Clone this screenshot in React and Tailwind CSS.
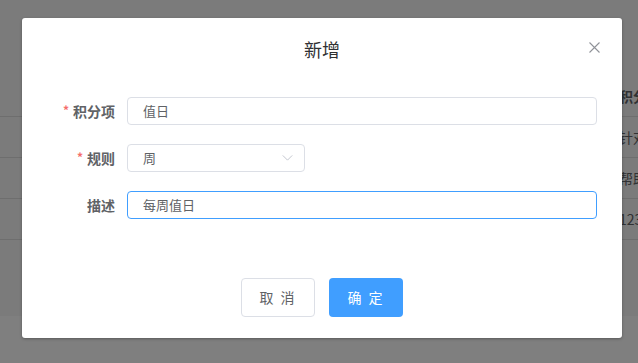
import React from "react";

const font = { fontFamily: '"Noto Sans CJK SC", "Noto Sans", sans-serif' };

function FormRow({ label, required, children }) {
  return (
    <div className="flex items-center h-[28px]">
      <label className="w-[105px] shrink-0 flex justify-end pr-3 text-[14px] font-bold text-[#606266]">
        {required && <span className="text-[#f56c6c] mr-[4px] text-[12px]">*</span>}
        {label}
      </label>
      {children}
    </div>
  );
}

export default function App() {
  const rows = ["积分", "针对", "帮助", "123"];

  return (
    <div className="relative w-[638px] h-[363px] overflow-hidden bg-white" style={font}>
      {/* page underneath */}
      <div className="h-[316px] bg-[#f6f6f6] pt-[76px]">
        {rows.map((r, i) => (
          <div
            key={r}
            className="h-[41px] border-b border-[#dcdcdc] flex items-center pl-[619px] text-[14px] text-[#606266] whitespace-nowrap"
          >
            <span className={i === 0 ? "font-bold" : ""}>{r}项目</span>
          </div>
        ))}
      </div>

      {/* mask */}
      <div className="absolute inset-0 bg-black/50" />

      {/* dialog */}
      <div className="absolute left-[22px] top-[18px] w-[600px] h-[320px] bg-white rounded-[3px] shadow-[0_1px_3px_rgba(0,0,0,0.3)] flex flex-col">
        <div className="pt-[19px] text-center text-[18px] leading-[24px] text-[#303133]">新增</div>
        <button className="absolute top-[24px] right-[22px] w-[11px] h-[11px] text-[#909399]">
          <svg viewBox="0 0 11 11" className="w-[11px] h-[11px]" fill="none" stroke="currentColor" strokeWidth="1.1">
            <path d="M0.5 0.5 L10.5 10.5 M10.5 0.5 L0.5 10.5" />
          </svg>
        </button>

        <div className="mt-[36px] flex flex-col gap-[19px] pr-[25px]">
          <FormRow label="积分项" required>
            <div className="flex-1 h-[28px] border border-[#dcdfe6] rounded-[4px] flex items-center pl-[15px] text-[13px] text-[#606266]">
              值日
            </div>
          </FormRow>
          <FormRow label="规则" required>
            <div className="w-[178px] h-[28px] border border-[#dcdfe6] rounded-[4px] flex items-center justify-between pl-[15px] pr-[11px] text-[13px] text-[#606266]">
              <span>周</span>
              <svg viewBox="0 0 12 7" className="w-[11px] h-[6px]" fill="none" stroke="#c0c4cc" strokeWidth="1.1">
                <path d="M0.5 0.5 L6 6 L11.5 0.5" />
              </svg>
            </div>
          </FormRow>
          <FormRow label="描述">
            <div className="flex-1 h-[28px] border border-[#409eff] rounded-[4px] flex items-center pl-[15px] text-[13px] text-[#606266]">
              每周值日
            </div>
          </FormRow>
        </div>

        <div className="mt-[59px] flex justify-center gap-[14px]">
          <button className="w-[74px] h-[39px] border border-[#dcdfe6] rounded-[4px] bg-white text-[14px] text-[#606266] tracking-[2px]">
            取 消
          </button>
          <button className="w-[74px] h-[39px] rounded-[4px] bg-[#409eff] text-[14px] text-white tracking-[2px]">
            确 定
          </button>
        </div>
      </div>
    </div>
  );
}
